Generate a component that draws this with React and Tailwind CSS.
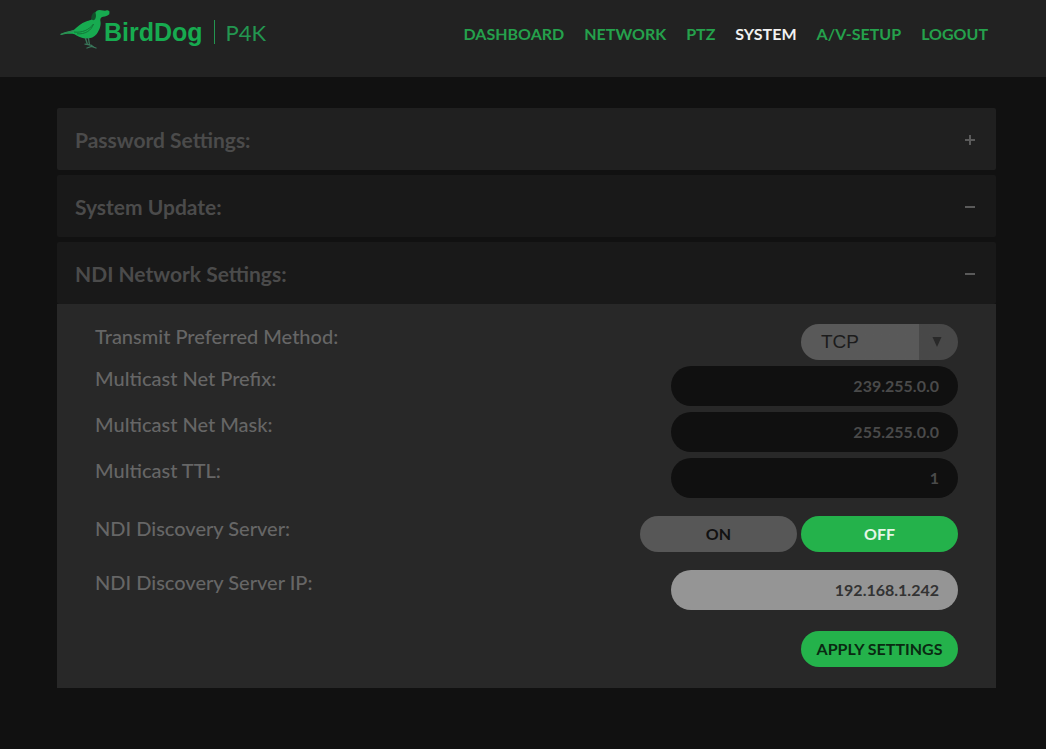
import React, { useState } from "react";

const links = ["Dashboard", "Network", "PTZ", "System", "A/V-Setup", "Logout"];

function BirdMark() {
  return (
    <svg viewBox="0 0 52 42" className="-mr-2 h-[42px] w-[52px] shrink-0" aria-hidden="true">
      <path
        d="M35 5C36 3 37.500 2 39.500 2L45 2.800C46.500 1.800 48.500 2.200 49.500 3.600L49.300 6.300C47.500 8 45.500 8.600 43 8.800C41 9.300 40.200 10.500 40.300 12.500C41.500 17 39.500 22 36.700 26C34 29.500 30 30.800 25 30.500C20.500 29.800 17 28 14.500 26.200C10 25.500 5 26 1 27L.5 26C5 24 10 23 14 21.800C18 18 21 15.500 26 13.500C29.500 12.300 32.500 12 33.500 9Z"
        fill="#17ab50"
      />
      <path d="M34.800 4C32.300 5 31 8 31.300 10.800C32.500 13 34.800 12.300 35.500 10.200C36.300 8.300 36.200 5.500 34.800 4Z" fill="#12502a" />
      <path d="M14 24C22 25 29 22 33.500 16C31.500 22.500 25 26.500 17 25.800" fill="none" stroke="#127236" strokeWidth=".9" />
      <path d="M.5 26.400L14 22.600" stroke="#3c7f58" strokeWidth="1" />
      <path d="M25.500 30.500L27.500 36.500M28.500 30.500L29.500 37M25 36.200L31 37.200L34 39.200M27 40L31.500 38.500L36 40" fill="none" stroke="#39775a" strokeWidth="1.300" strokeLinecap="round" />
    </svg>
  );
}

function SectionBar({ title, open, first }) {
  return (
    <button
      type="button"
      aria-expanded={open}
      className={
        "flex h-[62px] w-full items-center justify-between rounded-xs pt-0.5 pr-5 pl-[18px] text-left text-[21px] font-bold text-[#4b4b4b] " +
        (first ? "bg-[#202020]" : "bg-[#191919]")
      }
    >
      <span>{title}</span>
      <svg viewBox="0 0 12 12" className="size-3" stroke="#5a5a5a" strokeWidth="2" aria-hidden="true">
        <path d={open ? "M1 6H11" : "M1 6H11M6 1V11"} />
      </svg>
    </button>
  );
}

function Row({ label, id, children }) {
  return (
    <div className="flex items-start justify-between">
      <label htmlFor={id} className="text-xl leading-6 font-medium text-[#666666]">
        {label}
      </label>
      {children}
    </div>
  );
}

const field = "h-10 w-[287px] rounded-full pr-[19px] pb-0.5 pl-5 text-right text-base font-bold outline-none ";
const pill = "h-9 w-[157px] rounded-full text-base font-bold ";

export default function App() {
  const [server, setServer] = useState("OFF");
  return (
    <div className="min-h-screen bg-[#111111] font-['Lato',sans-serif]">
      <header className="flex h-[77px] items-start justify-between bg-[#222222] pr-[58px] pl-[60px]">
        <a href="#home" className="flex items-start pt-2 text-[#17ab50]">
          <BirdMark />
          <span className="mt-2 font-['Liberation_Sans',sans-serif] text-[25px] leading-8 font-bold">BirdDog</span>
          <span className="mx-[11px] mt-3 h-6 w-px bg-[#239650]" />
          <span className="mt-2 text-[22px] leading-[34px] text-[#239650]">P4K</span>
        </a>
        <nav className="flex gap-5 pt-[22px] text-base leading-6 font-bold text-[#25a14c] uppercase">
          {links.map((name) => (
            <a key={name} href={"#" + name.toLowerCase()} className={name === "System" ? "text-[#f1f1f1]" : ""}>
              {name}
            </a>
          ))}
        </nav>
      </header>

      <main className="pt-[31px] pr-[50px] pb-12 pl-[57px]">
        <div className="flex flex-col gap-[5px]">
          <SectionBar title="Password Settings:" first />
          <SectionBar title="System Update:" open />
          <SectionBar title="NDI Network Settings:" open />
        </div>
        <form className="flex flex-col bg-[#282828] pt-5 pr-[38px] pb-[21px] pl-[38px]" onSubmit={(e) => e.preventDefault()}>
          <div className="flex flex-col gap-1.5">
            <Row label="Transmit Preferred Method:" id="method">
              <div className="relative h-9 w-[157px]">
                <select
                  id="method"
                  className="h-9 w-full appearance-none rounded-full bg-linear-to-r from-[#595959] from-75% to-[#484848] to-75% pl-5 font-['Liberation_Sans',sans-serif] text-[19px] text-[#1c1c1c] outline-none"
                >
                  <option>TCP</option>
                  <option>UDP</option>
                  <option>Multicast</option>
                </select>
                <svg viewBox="0 0 10 10" className="pointer-events-none absolute top-[13px] right-4 size-2.5" aria-hidden="true">
                  <path d="M.5 0H9.500L5 10Z" fill="#292929" />
                </svg>
              </div>
            </Row>
            <Row label="Multicast Net Prefix:" id="prefix">
              <input id="prefix" defaultValue="239.255.0.0" className={field + "bg-[#101010] text-[#4a4a4a]"} />
            </Row>
            <Row label="Multicast Net Mask:" id="mask">
              <input id="mask" defaultValue="255.255.0.0" className={field + "bg-[#101010] text-[#4a4a4a]"} />
            </Row>
            <Row label="Multicast TTL:" id="ttl">
              <input id="ttl" defaultValue="1" className={field + "bg-[#101010] text-[#4a4a4a]"} />
            </Row>
          </div>
          <div className="mt-[18px] flex flex-col gap-[18px]">
            <Row label="NDI Discovery Server:" id="server-on">
              <div className="flex gap-1">
                {["ON", "OFF"].map((value) => (
                  <button
                    key={value}
                    id={"server-" + value.toLowerCase()}
                    type="button"
                    aria-pressed={server === value}
                    onClick={() => setServer(value)}
                    className={pill + (server === value ? "bg-[#24b24b] text-[#e4f6e6]" : "bg-[#575757] text-[#111111]")}
                  >
                    {value}
                  </button>
                ))}
              </div>
            </Row>
            <Row label="NDI Discovery Server IP:" id="server-ip">
              <input id="server-ip" defaultValue="192.168.1.242" className={field + "bg-[#959595] text-[#333333]"} />
            </Row>
          </div>
          <button type="submit" className={pill + "mt-[21px] self-end bg-[#24b24b] text-[#0a2a12]"}>
            APPLY SETTINGS
          </button>
        </form>
      </main>
    </div>
  );
}
